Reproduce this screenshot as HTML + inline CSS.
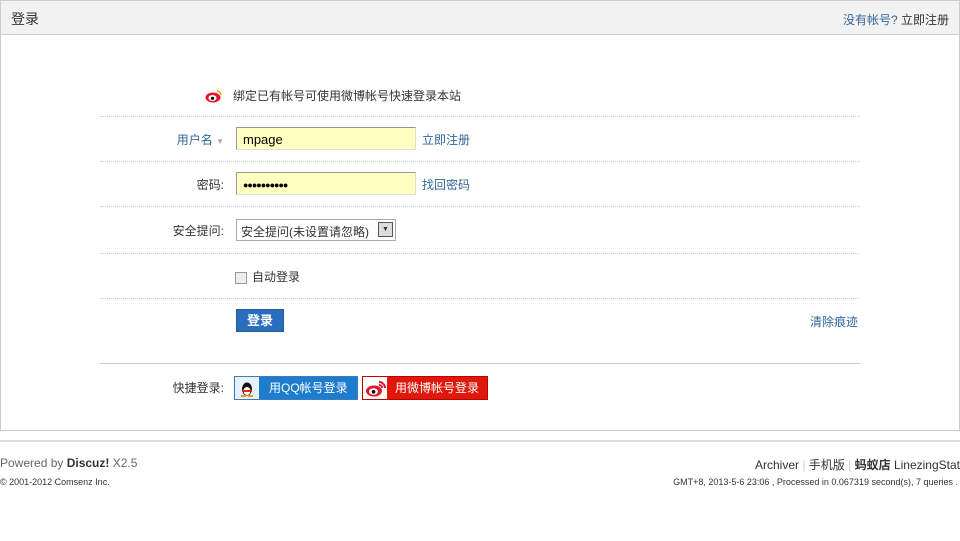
<!DOCTYPE html>
<html><head><meta charset="utf-8"><style>
*{margin:0;padding:0;box-sizing:border-box}
body{width:960px;height:541px;background:#fff;font:12px "Liberation Sans","Noto Sans CJK SC",sans-serif;color:#333;position:relative;overflow:hidden}
.box{position:absolute;left:0;top:0;width:960px;height:431px;border:1px solid #ccc}
.hd{height:34px;background:#f2f2f2;border-bottom:1px solid #ccc;position:relative}
.hd h3{position:absolute;left:10px;top:8px;font-size:14px;font-weight:normal;color:#333}
.hd .r{position:absolute;right:10px;top:10px;font-size:12px}
a{color:#336699;text-decoration:none}
.a{position:absolute}
.dl{position:absolute;left:100px;width:760px;border-top:1px dotted #ccc}
.lbl{position:absolute;text-align:right;width:124px;left:100px}
.inp{position:absolute;left:236px;width:180px;height:23px;background:#ffffc0;border:1px solid #999;border-right-color:#ddd;border-bottom-color:#ddd;padding:4px 6px;font-size:13px;color:#000;line-height:15px}
</style></head><body>
<div class="box">
<div class="hd"><h3>登录</h3><div class="r"><a>没有帐号?</a> 立即注册</div></div>
</div>
<svg class="a" style="left:205px;top:89px" width="18" height="14" viewBox="0 0 18 14"><ellipse cx="8" cy="8.5" rx="7.5" ry="5" fill="#e6162d"/><ellipse cx="7.5" cy="9" rx="4" ry="3" fill="#fff"/><circle cx="7.5" cy="9.3" r="1.6" fill="#000"/><path d="M12 2a4 4 0 0 1 4 4" stroke="#f90" stroke-width="1.6" fill="none"/></svg>
<div class="a" style="left:233px;top:87px">绑定已有帐号可使用微博帐号快速登录本站</div>
<div class="dl" style="top:116px"></div>
<div class="lbl" style="top:131px;color:#336699">用户名 <span style="color:#aaa;font-size:8px">▼</span></div>
<div class="inp" style="top:127px">mpage</div>
<a class="a" style="left:422px;top:131px">立即注册</a>
<div class="dl" style="top:161px"></div>
<div class="lbl" style="top:176px">密码:</div>
<div class="inp" style="top:172px;font-size:9px;letter-spacing:-1px;padding-top:5px">●●●●●●●●●●</div>
<a class="a" style="left:422px;top:176px">找回密码</a>
<div class="dl" style="top:206px"></div>
<div class="lbl" style="top:222px">安全提问:</div>
<div class="a" style="left:236px;top:219px;width:160px;height:22px;border:1px solid #aaa;padding:3px 4px;font-size:12px">安全提问(未设置请忽略)<span style="position:absolute;right:2px;top:2px;width:15px;height:15px;border:1px solid #555;background:#ddd;font-size:7px;text-align:center;line-height:13px">▼</span></div>
<div class="dl" style="top:253px"></div>
<div class="a" style="left:235px;top:272px;width:12px;height:12px;border:1px solid #999;background:#eee"></div>
<div class="a" style="left:252px;top:268px">自动登录</div>
<div class="dl" style="top:298px"></div>
<div class="a" style="left:236px;top:309px;width:48px;height:23px;background:#2a6fbf;border:1px solid #235a9c;color:#fff;font-weight:bold;font-size:13px;text-align:center;line-height:21px">登录</div>
<a class="a" style="left:810px;top:313px">清除痕迹</a>
<div class="a" style="left:100px;top:363px;width:760px;border-top:1px solid #ccc"></div>
<div class="lbl" style="top:379px">快捷登录:</div>
<div class="a" style="left:234px;top:376px;width:124px;height:24px;border:1px solid #3a7cc0;background:#1e7ccc;color:#fff;padding-left:34px;line-height:22px;font-size:12px"><span style="position:absolute;left:0;top:0;width:24px;height:22px;background:#e8f0fa"></span><svg style="position:absolute;left:5px;top:3px" width="14" height="17" viewBox="0 0 14 17"><ellipse cx="7" cy="9" rx="5" ry="6.5" fill="#111"/><ellipse cx="7" cy="11" rx="3.5" ry="4" fill="#fff"/><path d="M2 10h10v2H2z" fill="#e22"/><path d="M1 15h5v2H1zM8 15h5v2H8z" fill="#f90"/></svg>用QQ帐号登录</div>
<div class="a" style="left:362px;top:376px;width:126px;height:24px;border:1px solid #b00;background:#e0180c;color:#fff;padding-left:32px;line-height:22px;font-size:12px"><span style="position:absolute;left:0;top:0;width:24px;height:22px;background:#fff"></span><svg style="position:absolute;left:2px;top:3px" width="22" height="17" viewBox="0 0 22 17"><ellipse cx="9" cy="11" rx="8" ry="5.5" fill="#e6162d"/><ellipse cx="8.5" cy="11.5" rx="4.5" ry="3.3" fill="#fff"/><circle cx="8.5" cy="11.8" r="1.8" fill="#000"/><path d="M14 2a6 6 0 0 1 6 6M14 5a3 3 0 0 1 3 3" stroke="#e6162d" stroke-width="2" fill="none"/></svg>用微博帐号登录</div>
<div class="a" style="left:0;top:440px;width:960px;border-top:2px solid #ddd"></div>
<div class="a" style="left:0;top:456px;color:#666">Powered by <b style="color:#333">Discuz!</b> X2.5</div>
<div class="a" style="left:0;top:477px;font-size:9px;color:#333">© 2001-2012 Comsenz Inc.</div>
<div class="a" style="right:0;top:456px;color:#333">Archiver <span style="color:#ccc">|</span> 手机版 <span style="color:#ccc">|</span> <b>蚂蚁店</b> LinezingStat</div>
<div class="a" style="right:2px;top:477px;font-size:9px;color:#333">GMT+8, 2013-5-6 23:06 , Processed in 0.067319 second(s), 7 queries .</div>
</body></html>
